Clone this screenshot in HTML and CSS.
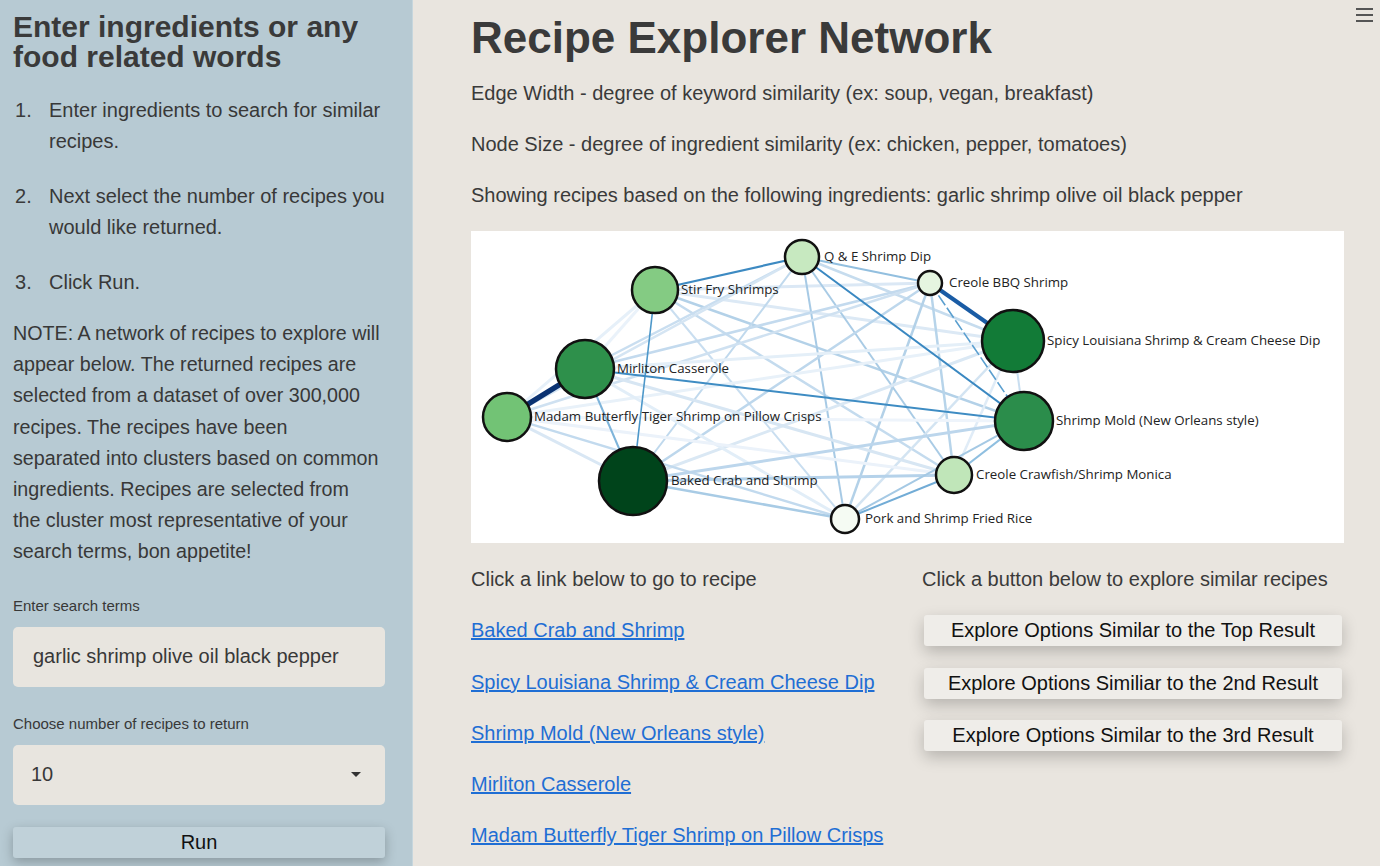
FILE: index.html
```html
<!DOCTYPE html>
<html>
<head>
<meta charset="utf-8">
<title>Recipe Explorer Network</title>
<link rel="stylesheet" href="styles.css">
</head>
<body>
<div class="app">
  <aside class="sidebar">
    <h2 class="side-title">Enter ingredients or any food related words</h2>
    <ol class="steps">
      <li><span>Enter ingredients to search for similar<br>recipes.</span></li>
      <li><span>Next select the number of recipes you<br>would like returned.</span></li>
      <li><span>Click Run.</span></li>
    </ol>
    <p class="note">NOTE: A network of recipes to explore will<br>appear below. The returned recipes are<br>selected from a dataset of over 300,000<br>recipes. The recipes have been<br>separated into clusters based on common<br>ingredients. Recipes are selected from<br>the cluster most representative of your<br>search terms, bon appetite!</p>
    <label class="field-label">Enter search terms</label>
    <div class="input-box">garlic shrimp olive oil black pepper</div>
    <label class="field-label second">Choose number of recipes to return</label>
    <div class="select-box"><span>10</span><span class="caret"></span></div>
    <button class="run-btn">Run</button>
  </aside>
  <main class="main">
    <div class="menu-icon"><span></span><span></span><span></span></div>
    <h1 class="title">Recipe Explorer Network</h1>
    <p class="desc">Edge Width - degree of keyword similarity (ex: soup, vegan, breakfast)</p>
    <p class="desc">Node Size - degree of ingredient similarity (ex: chicken, pepper, tomatoes)</p>
    <p class="desc">Showing recipes based on the following ingredients: garlic shrimp olive oil black pepper</p>
    <div class="graph">
      <svg width="873" height="312" viewBox="471 231 873 312">
        <g fill="none" stroke-linecap="butt">
          <line x1="655" y1="290" x2="930" y2="283" stroke="#dbe8f5" stroke-width="3"/>
          <line x1="655" y1="290" x2="1013" y2="341" stroke="#dce9f5" stroke-width="3"/>
          <line x1="655" y1="290" x2="1024" y2="421" stroke="#b3d1e8" stroke-width="2.5"/>
          <line x1="655" y1="290" x2="954" y2="475" stroke="#c4dbee" stroke-width="2.5"/>
          <line x1="655" y1="290" x2="845" y2="519" stroke="#c9def0" stroke-width="2"/>
          <line x1="655" y1="290" x2="585" y2="369" stroke="#eaf2fa" stroke-width="3"/>
          <line x1="655" y1="290" x2="507" y2="417" stroke="#e6f0f9" stroke-width="3"/>
          <line x1="802" y1="257" x2="1013" y2="341" stroke="#c6dcee" stroke-width="2.5"/>
          <line x1="802" y1="257" x2="954" y2="475" stroke="#a9cbe5" stroke-width="2"/>
          <line x1="802" y1="257" x2="845" y2="519" stroke="#a7cae5" stroke-width="2"/>
          <line x1="802" y1="257" x2="633" y2="481" stroke="#c0d9ed" stroke-width="2"/>
          <line x1="802" y1="257" x2="585" y2="369" stroke="#c9def0" stroke-width="2.5"/>
          <line x1="802" y1="257" x2="507" y2="417" stroke="#d5e5f3" stroke-width="2.5"/>
          <line x1="802" y1="257" x2="930" y2="283" stroke="#92bfdf" stroke-width="2"/>
          <line x1="930" y1="283" x2="585" y2="369" stroke="#c3daee" stroke-width="2.5"/>
          <line x1="930" y1="283" x2="507" y2="417" stroke="#cfe1f1" stroke-width="2.5"/>
          <line x1="930" y1="283" x2="633" y2="481" stroke="#bdd7ec" stroke-width="2.5"/>
          <line x1="930" y1="283" x2="845" y2="519" stroke="#b3d1e8" stroke-width="2.5"/>
          <line x1="930" y1="283" x2="954" y2="475" stroke="#b7d4ea" stroke-width="2.5"/>
          <line x1="1013" y1="341" x2="585" y2="369" stroke="#e4eff8" stroke-width="3"/>
          <line x1="1013" y1="341" x2="507" y2="417" stroke="#e8f1f9" stroke-width="3"/>
          <line x1="1013" y1="341" x2="633" y2="481" stroke="#dae8f4" stroke-width="3"/>
          <line x1="1013" y1="341" x2="845" y2="519" stroke="#d3e4f2" stroke-width="2.5"/>
          <line x1="1013" y1="341" x2="954" y2="475" stroke="#e0ecf7" stroke-width="2.5"/>
          <line x1="1013" y1="341" x2="1024" y2="421" stroke="#c9def0" stroke-width="2"/>
          <line x1="585" y1="369" x2="954" y2="475" stroke="#d7e6f3" stroke-width="3"/>
          <line x1="585" y1="369" x2="845" y2="519" stroke="#e2eef8" stroke-width="3"/>
          <line x1="507" y1="417" x2="1024" y2="421" stroke="#eef4fb" stroke-width="3"/>
          <line x1="507" y1="417" x2="954" y2="475" stroke="#ebf2fa" stroke-width="3"/>
          <line x1="507" y1="417" x2="845" y2="519" stroke="#c2daee" stroke-width="2.5"/>
          <line x1="507" y1="417" x2="633" y2="481" stroke="#d9e7f4" stroke-width="3"/>
          <line x1="633" y1="481" x2="1024" y2="421" stroke="#bcd6ec" stroke-width="3"/>
          <line x1="633" y1="481" x2="954" y2="475" stroke="#b5d2ea" stroke-width="3"/>
          <line x1="633" y1="481" x2="845" y2="519" stroke="#a8cbe5" stroke-width="2.5"/>
          <line x1="845" y1="519" x2="1024" y2="421" stroke="#a5c9e4" stroke-width="2"/>
          <line x1="845" y1="519" x2="954" y2="475" stroke="#72acd6" stroke-width="2"/>
          <line x1="954" y1="475" x2="1024" y2="421" stroke="#8fbfe0" stroke-width="2"/>
          <line x1="930" y1="283" x2="1024" y2="421" stroke="#5b9fcf" stroke-width="1.6" stroke-dasharray="12 3"/>
          <line x1="585" y1="369" x2="633" y2="481" stroke="#7eb4da" stroke-width="2"/>
          <line x1="655" y1="290" x2="633" y2="481" stroke="#4c97c9" stroke-width="1.6"/>
          <line x1="585" y1="369" x2="1024" y2="421" stroke="#3e8cc3" stroke-width="2"/>
          <line x1="802" y1="257" x2="1024" y2="421" stroke="#3a88c1" stroke-width="2"/>
          <line x1="802" y1="257" x2="655" y2="290" stroke="#3d8ac2" stroke-width="2.2"/>
          <line x1="930" y1="283" x2="1013" y2="341" stroke="#1a5ca5" stroke-width="4"/>
          <line x1="585" y1="369" x2="507" y2="417" stroke="#0a3272" stroke-width="5.5"/>
        </g>
        <g stroke="#111" stroke-width="2.5">
          <circle cx="802" cy="257" r="17" fill="#c7e9c0"/>
          <circle cx="655" cy="290" r="23" fill="#84cb83"/>
          <circle cx="930" cy="283" r="12" fill="#e5f5e0"/>
          <circle cx="1013" cy="341" r="31" fill="#127b37"/>
          <circle cx="585" cy="369" r="29" fill="#2e904b"/>
          <circle cx="507" cy="417" r="24" fill="#72c375"/>
          <circle cx="1024" cy="421" r="29" fill="#2b8d4b"/>
          <circle cx="954" cy="475" r="18" fill="#c0e6b9"/>
          <circle cx="633" cy="481" r="34" fill="#00441b"/>
          <circle cx="845" cy="519" r="14" fill="#f5fbf3"/>
        </g>
        <g class="node-label">
          <text x="824" y="261">Q &amp; E Shrimp Dip</text>
          <text x="681" y="294">Stir Fry Shrimps</text>
          <text x="949" y="287">Creole BBQ Shrimp</text>
          <text x="1047" y="345">Spicy Louisiana Shrimp &amp; Cream Cheese Dip</text>
          <text x="617" y="373">Mirliton Casserole</text>
          <text x="534" y="421">Madam Butterfly Tiger Shrimp on Pillow Crisps</text>
          <text x="1056" y="425">Shrimp Mold (New Orleans style)</text>
          <text x="976" y="479">Creole Crawfish/Shrimp Monica</text>
          <text x="671" y="485">Baked Crab and Shrimp</text>
          <text x="865" y="523">Pork and Shrimp Fried Rice</text>
        </g>
      </svg>
    </div>
    <div class="cols">
      <div class="col">
        <p class="col-head">Click a link below to go to recipe</p>
        <a class="recipe-link" href="#">Baked Crab and Shrimp</a>
        <a class="recipe-link" href="#">Spicy Louisiana Shrimp &amp; Cream Cheese Dip</a>
        <a class="recipe-link" href="#">Shrimp Mold (New Orleans style)</a>
        <a class="recipe-link" href="#">Mirliton Casserole</a>
        <a class="recipe-link" href="#">Madam Butterfly Tiger Shrimp on Pillow Crisps</a>
      </div>
      <div class="col">
        <p class="col-head">Click a button below to explore similar recipes</p>
        <button class="explore-btn">Explore Options Similar to the Top Result</button>
        <button class="explore-btn">Explore Options Similiar to the 2nd Result</button>
        <button class="explore-btn">Explore Options Similar to the 3rd Result</button>
      </div>
    </div>
  </main>
</div>
</body>
</html>
```
FILE: styles.css
```css
* { box-sizing: border-box; }
html, body {
  margin: 0;
  padding: 0;
  height: 100%;
  overflow: hidden;
}
body {
  font-family: "Liberation Sans", Arial, sans-serif;
  color: #383838;
  background: #e9e5df;
}
.app {
  display: flex;
  height: 866px;
}
.sidebar {
  width: 413px;
  flex: none;
  background: #b7cad3;
  border-right: 1px solid #c6d6dd;
  padding: 12px 10px 0 13px;
  display: flex;
  flex-direction: column;
  white-space: nowrap;
}
.side-title {
  margin: 0;
  font-size: 30px;
  line-height: 30px;
  font-weight: bold;
  color: #3a3a3a;
  white-space: normal;
  width: 372px;
}
.steps {
  margin: 23px 0 0 0;
  padding: 0;
  list-style: none;
  counter-reset: step;
  font-size: 20px;
  line-height: 31px;
}
.steps li {
  counter-increment: step;
  display: flex;
  margin-bottom: 24px;
}
.steps li::before {
  content: counter(step) ".";
  flex: none;
  width: 36px;
  padding-left: 2px;
  color: #3a3a3a;
}
.steps li:last-child { margin-bottom: 0; }
.steps li span { margin-left: -2px; }
.note {
  margin: 20px 0 0 0;
  font-size: 19.7px;
  line-height: 31.2px;
}
.field-label {
  display: block;
  font-size: 15px;
  line-height: 18px;
  margin-top: 29px;
}
.field-label.second { margin-top: 28px; }
.input-box, .select-box {
  margin-top: 12px;
  width: 372px;
  height: 60px;
  background: #e8e5df;
  border-radius: 5px;
  font-size: 20px;
  display: flex;
  align-items: center;
}
.input-box { padding-left: 20px; }
.select-box {
  padding: 0 24px 0 18px;
  justify-content: space-between;
}
.caret {
  width: 0;
  height: 0;
  border-left: 5px solid transparent;
  border-right: 5px solid transparent;
  border-top: 5px solid #333;
}
.run-btn {
  margin-top: 22px;
  height: 31px;
  width: 372px;
  border: none;
  border-radius: 3px;
  background: #c0d1d9;
  font-family: inherit;
  font-size: 20px;
  color: #111;
  box-shadow: 0 4px 12px rgba(0,0,0,0.25);
}
.main {
  flex: 1;
  position: relative;
  padding: 13px 36px 0 58px;
}
.menu-icon {
  position: absolute;
  top: 8px;
  right: 7px;
  width: 17px;
  display: flex;
  flex-direction: column;
  gap: 4px;
}
.menu-icon span {
  display: block;
  height: 2px;
  background: #555;
}
.title {
  margin: 0;
  font-size: 44px;
  line-height: 50px;
  font-weight: bold;
  color: #3a3a3a;
}
.desc {
  margin: 14px 0 0 0;
  font-size: 20px;
  line-height: 32px;
  color: #3a3a3a;
}
.desc + .desc { margin-top: 19px; }
.graph {
  margin-top: 20px;
  width: 873px;
  height: 312px;
  background: #ffffff;
}
.graph svg { display: block; }
.node-label text {
  font-family: "Open Sans", "Noto Sans", sans-serif;
  font-size: 13.3px;
  fill: #222;
}
.cols {
  display: grid;
  grid-template-columns: 422px 422px;
  gap: 29px;
  margin-top: 20px;
}
.col { display: flex; flex-direction: column; align-items: flex-start; }
.col-head {
  margin: 0;
  font-size: 20px;
  line-height: 32px;
  color: #3a3a3a;
}
.recipe-link {
  margin-top: 19.3px;
  font-size: 20px;
  line-height: 32px;
  color: #1f6ed4;
  text-decoration: underline;
}
.explore-btn {
  margin-top: 20px;
  margin-left: 2px;
  width: 418px;
  height: 31px;
  border: none;
  border-radius: 3px;
  background: #efede9;
  font-family: inherit;
  font-size: 20px;
  color: #111;
  box-shadow: 0 6px 16px rgba(0,0,0,0.22);
}
.explore-btn + .explore-btn { margin-top: 21.5px; }
```
